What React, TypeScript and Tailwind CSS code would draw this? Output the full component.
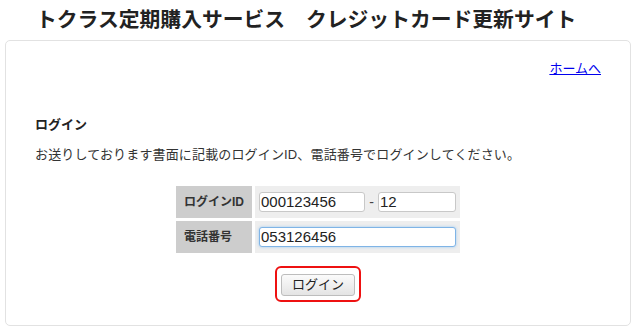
import { useState } from 'react';

const jp = '[font-family:"Liberation_Sans","Noto_Sans_CJK_JP",sans-serif]';

export default function App() {
  const [loginId, setLoginId] = useState('000123456');
  const [branch, setBranch] = useState('12');
  const [tel, setTel] = useState('053126456');

  return (
    <div className={`w-[640px] h-[334px] bg-white text-[#333] ${jp}`}>
      {/* Title */}
      <h1 className="pl-[36px] pt-[6px] h-[40px] text-[20.8px] leading-[28px] font-bold text-[#222]">
        トクラス定期購入サービス　クレジットカード更新サイト
      </h1>

      {/* Card */}
      <div className="ml-[5px] w-[626px] h-[286px] border border-[#e2e2e2] rounded-[5px] px-[29px]">
        <div className="flex justify-end pt-[19px]">
          <a href="#" className="text-[13px] leading-[18px] text-[#0000ee] underline">
            ホームへ
          </a>
        </div>

        <h2 className="mt-[38px] text-[13px] leading-[18px] font-bold text-[#222]">ログイン</h2>
        <p className="mt-[12px] text-[13px] leading-[18px] text-[#333] tracking-[0.15px]">
          お送りしております書面に記載のログインID、電話番号でログインしてください。
        </p>

        {/* Form table */}
        <div className="mt-[22px] flex justify-center">
          <div className="grid grid-cols-[76px_205px] gap-[3px]">
            <div className="bg-[#cdcdcd] h-[32px] flex items-center pl-[8px] text-[12px] font-bold text-[#333]">
              ログインID
            </div>
            <div className="bg-[#eeeeee] h-[32px] flex items-center pl-[4px] gap-[2px]">
              <input
                value={loginId}
                onChange={(e) => setLoginId(e.target.value)}
                className="w-[106px] h-[20px] bg-white border border-[#c8c8c8] rounded-[3px] px-[1px] text-[15px] text-[#222] outline-none font-[Liberation_Sans,sans-serif]"
              />
              <span className="w-[9px] text-center text-[14px] text-[#444]">-</span>
              <input
                value={branch}
                onChange={(e) => setBranch(e.target.value)}
                className="w-[78px] h-[20px] bg-white border border-[#c8c8c8] rounded-[3px] px-[1px] text-[15px] text-[#222] outline-none font-[Liberation_Sans,sans-serif]"
              />
            </div>
            <div className="bg-[#cdcdcd] h-[32px] flex items-center pl-[8px] text-[12px] font-bold text-[#333]">
              電話番号
            </div>
            <div className="bg-[#eeeeee] h-[32px] flex items-center pl-[4px]">
              <input
                value={tel}
                onChange={(e) => setTel(e.target.value)}
                className="w-[197px] h-[20px] bg-white border border-[#7fb4e6] rounded-[3px] px-[1px] text-[15px] text-[#222] outline-none shadow-[0_0_3px_#9cc8f0] font-[Liberation_Sans,sans-serif]"
              />
            </div>
          </div>
        </div>

        {/* Button */}
        <div className="mt-[13px] flex justify-center">
          <div className="border-2 border-[#ee1111] rounded-[6px] px-[4px] py-[4px]">
            <button className="w-[74px] h-[22px] border border-[#bdbdbd] rounded-[3px] bg-gradient-to-b from-[#fbfbfb] to-[#e4e4e4] text-[13px] text-[#222]">
              ログイン
            </button>
          </div>
        </div>
      </div>
    </div>
  );
}
